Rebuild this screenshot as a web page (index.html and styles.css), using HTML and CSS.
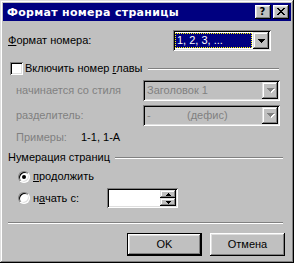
FILE: index.html
```html
<!DOCTYPE html>
<html lang="ru">
<head>
<meta charset="utf-8">
<link rel="stylesheet" href="styles.css">
</head>
<body>
<div class="window">
  <div class="titlebar">
    <span class="title">Формат номера страницы</span>
    <div class="tbtns">
      <div class="tbtn help">?</div>
      <div class="tbtn close">
        <svg width="8" height="7" viewBox="0 0 8 7" shape-rendering="crispEdges"><path d="M0 0h2v1h1v1h2v-1h1v-1h2v1h-1v1h-1v1h-1v1h1v1h1v1h1v1h-2v-1h-1v-1h-2v1h-1v1h-2v-1h1v-1h1v-1h1v-1h-1v-1h-1v-1h-1z" fill="#000"/></svg>
      </div>
    </div>
  </div>
  <div class="content">
    <div class="row r-format">
      <span class="lbl-format"><u>Ф</u>ормат номера:</span>
      <div class="combo combo-format">
        <div class="combo-field"><span class="sel">1, 2, 3, ...</span></div>
        <div class="combo-btn">
          <svg width="7" height="4" viewBox="0 0 7 4" shape-rendering="crispEdges"><path d="M0 0h7v1h-1v1h-1v1h-1v1h-1v-1h-1v-1h-1v-1h-1z" fill="#000"/></svg>
        </div>
      </div>
    </div>

    <div class="row r-chapter">
      <span class="checkbox"></span>
      <span class="chk-label">Включить номер <u>г</u>лавы</span>
      <span class="rule"></span>
    </div>

    <div class="row r-sub r-style">
      <span class="lbl-sub disabled">начинается со стиля</span>
      <div class="combo combo-dis">
        <div class="combo-field"><span class="dis-text">Заголовок 1</span></div>
        <div class="combo-btn">
          <svg width="8" height="5" viewBox="0 0 8 5" shape-rendering="crispEdges"><path d="M1 1h7v1h-1v1h-1v1h-1v1h-1v-1h-1v-1h-1v-1h-1z" fill="#fff"/><path d="M0 0h7v1h-1v1h-1v1h-1v1h-1v-1h-1v-1h-1v-1h-1z" fill="#808080"/></svg>
        </div>
      </div>
    </div>

    <div class="row r-sub r-sep">
      <span class="lbl-sub disabled">разделитель:</span>
      <div class="combo combo-dis">
        <div class="combo-field"><span class="dis-text dash">-</span><span class="dis-text">(дефис)</span></div>
        <div class="combo-btn">
          <svg width="8" height="5" viewBox="0 0 8 5" shape-rendering="crispEdges"><path d="M1 1h7v1h-1v1h-1v1h-1v1h-1v-1h-1v-1h-1v-1h-1z" fill="#fff"/><path d="M0 0h7v1h-1v1h-1v1h-1v1h-1v-1h-1v-1h-1v-1h-1z" fill="#808080"/></svg>
        </div>
      </div>
    </div>

    <div class="row r-sub r-examples">
      <span class="lbl-ex disabled">Примеры:</span>
      <span class="ex-val">1-1, 1-А</span>
    </div>

    <div class="row r-numbering">
      <span class="grp-label">Нумерация страниц</span>
      <span class="rule"></span>
    </div>

    <div class="row r-radio r-cont">
      <span class="radio checked"><span class="dot"></span></span>
      <span class="radio-label"><u>п</u>родолжить</span>
    </div>

    <div class="row r-radio r-start">
      <span class="radio"></span>
      <span class="radio-label lbl-start">н<u>а</u>чать с:</span>
      <div class="spin">
        <div class="spin-field"></div>
        <div class="spin-btns">
          <div class="spin-btn"><svg width="5" height="3" viewBox="0 0 5 3" shape-rendering="crispEdges"><path d="M2 0h1v1h1v1h1v1h-5v-1h1v-1h1z" fill="#000"/></svg></div>
          <div class="spin-btn"><svg width="5" height="3" viewBox="0 0 5 3" shape-rendering="crispEdges"><path d="M0 0h5v1h-1v1h-1v1h-1v-1h-1v-1h-1z" fill="#000"/></svg></div>
        </div>
      </div>
    </div>

    <div class="hsep"></div>

    <div class="row r-buttons">
      <div class="btn default"><span class="btn-in">OK</span></div>
      <div class="btn"><span class="btn-in">Отмена</span></div>
    </div>
  </div>
</div>
</body>
</html>
```

FILE: styles.css
```css
html, body {
  margin: 0;
  padding: 0;
  background: #c0c0c0;
}

.window {
  width: 294px;
  height: 263px;
  box-sizing: border-box;
  padding: 3px;
  background: #c0c0c0;
  box-shadow: inset -1px -1px #000, inset 1px 1px #dfdfdf, inset -2px -2px #808080, inset 2px 2px #fff;
  font-family: "Liberation Sans", Arial, sans-serif;
  font-size: 11px;
  color: #000;
  display: flex;
  flex-direction: column;
}

.titlebar {
  height: 18px;
  flex: none;
  background: #000080;
  color: #fff;
  display: flex;
  align-items: center;
  padding: 0 2px 0 4px;
}

.title {
  font-family: "DejaVu Sans", sans-serif;
  font-weight: bold;
  font-size: 11px;
  line-height: 13px;
  letter-spacing: 0.3px;
  white-space: nowrap;
}

.tbtns {
  margin-left: auto;
  display: flex;
  gap: 2px;
}

.tbtn {
  width: 16px;
  height: 14px;
  box-sizing: border-box;
  background: #c0c0c0;
  box-shadow: inset -1px -1px #000, inset 1px 1px #fff, inset -2px -2px #808080, inset 2px 2px #dfdfdf;
  display: flex;
  align-items: center;
  justify-content: center;
  color: #000;
}

.tbtn.help {
  font-family: "DejaVu Sans", sans-serif;
  font-weight: bold;
  font-size: 10px;
  line-height: 12px;
  padding-right: 1px;
}

.tbtn.close svg {
  display: block;
  margin-top: -1px;
}

.content {
  flex: 1;
  display: flex;
  flex-direction: column;
}

.row {
  display: flex;
  align-items: center;
  flex: none;
  line-height: 13px;
  white-space: nowrap;
}

u {
  text-decoration: underline;
  text-underline-offset: 1px;
}

/* format row */
.r-format {
  margin-top: 9px;
  height: 21px;
  padding-left: 5px;
}

.lbl-format {
  width: 165px;
  flex: none;
}

.combo {
  display: flex;
  box-sizing: border-box;
  height: 21px;
  padding: 2px;
  background: #fff;
  box-shadow: inset 1px 1px #808080, inset -1px -1px #fff, inset 2px 2px #000, inset -2px -2px #dfdfdf;
}

.combo-format {
  width: 98px;
}

.combo-field {
  flex: 1;
  display: flex;
  align-items: center;
  padding: 1px 0 1px 1px;
}

.combo-format .combo-field {
  padding: 1px 1px 1px 0;
}

.sel {
  flex: 1;
  align-self: stretch;
  display: flex;
  align-items: center;
  background: #000080;
  color: #fff;
  padding-left: 2px;
  outline: 1px dotted #ffff00;
  outline-offset: -1px;
}

.combo-btn {
  width: 16px;
  flex: none;
  background: #c0c0c0;
  box-shadow: inset -1px -1px #000, inset 1px 1px #dfdfdf, inset -2px -2px #808080, inset 2px 2px #fff;
  display: flex;
  align-items: center;
  justify-content: center;
}

.combo-btn svg {
  display: block;
  margin-left: 1px;
}

/* chapter group */
.r-chapter {
  margin-top: 11px;
  height: 13px;
  padding-left: 7px;
}

.checkbox {
  width: 13px;
  height: 13px;
  box-sizing: border-box;
  flex: none;
  background: #fff;
  box-shadow: inset 1px 1px #808080, inset -1px -1px #fff, inset 2px 2px #000, inset -2px -2px #dfdfdf;
}

.chk-label {
  margin-left: 2px;
}

.rule {
  flex: 1;
  height: 0;
  border-top: 1px solid #808080;
  border-bottom: 1px solid #fff;
  margin-left: 5px;
}

.r-chapter .rule {
  margin-right: 12px;
}

.r-sub {
  padding-left: 13px;
}

.r-style {
  margin-top: 5px;
  height: 21px;
}

.r-sep {
  margin-top: 4px;
  height: 21px;
}

.lbl-sub {
  width: 127px;
  flex: none;
}

.disabled {
  color: #808080;
}

.combo-dis {
  width: 137px;
  background: #c0c0c0;
}

.combo-dis .combo-field {
  padding-left: 2px;
}

.dis-text {
  color: #808080;
}

.dash {
  width: 40px;
}

.r-examples {
  margin-top: 5px;
  height: 13px;
}

.lbl-ex {
  width: 65px;
  flex: none;
}

.r-numbering {
  margin-top: 7px;
  height: 13px;
  padding-left: 5px;
}

.r-numbering .rule {
  margin-right: 8px;
}

/* radios */
.r-radio {
  padding-left: 15px;
}

.r-cont {
  margin-top: 6px;
  height: 13px;
}

.r-start {
  margin-top: 5px;
  height: 20px;
}

.radio {
  width: 12px;
  height: 12px;
  box-sizing: border-box;
  flex: none;
  border-radius: 50%;
  background: #fff;
  border: 1px solid;
  border-color: #808080 #fff #fff #808080;
  box-shadow: inset 1px 1px #000, inset -1px -1px #dfdfdf;
  display: flex;
  align-items: center;
  justify-content: center;
}

.dot {
  width: 4px;
  height: 4px;
  border-radius: 50%;
  background: #000;
}

.radio-label {
  margin-left: 3px;
}

.lbl-start {
  width: 74px;
  flex: none;
}

.spin {
  width: 71px;
  height: 20px;
  box-sizing: border-box;
  padding: 2px;
  display: flex;
  background: #fff;
  box-shadow: inset 1px 1px #808080, inset -1px -1px #fff, inset 2px 2px #000, inset -2px -2px #dfdfdf;
}

.spin-field {
  flex: 1;
}

.spin-btns {
  width: 16px;
  display: flex;
  flex-direction: column;
}

.spin-btn {
  flex: 1;
  background: #c0c0c0;
  box-shadow: inset -1px -1px #000, inset 1px 1px #dfdfdf, inset -2px -2px #808080, inset 2px 2px #fff;
  display: flex;
  align-items: center;
  justify-content: center;
}

.spin-btn svg {
  display: block;
}

.hsep {
  margin: 14px 8px 0 5px;
  height: 0;
  flex: none;
  border-top: 1px solid #808080;
  border-bottom: 1px solid #fff;
}

.r-buttons {
  margin-top: 9px;
  justify-content: flex-end;
  gap: 8px;
  padding-right: 6px;
}

.btn {
  width: 75px;
  height: 23px;
  box-sizing: border-box;
  background: #c0c0c0;
  box-shadow: inset -1px -1px #000, inset 1px 1px #fff, inset -2px -2px #808080, inset 2px 2px #dfdfdf;
  display: flex;
  align-items: center;
  justify-content: center;
}

.btn.default {
  border: 1px solid #000;
  box-shadow: inset -1px -1px #000, inset 1px 1px #fff, inset -2px -2px #808080, inset 2px 2px #dfdfdf;
}

.btn-in {
  line-height: 13px;
}
```
